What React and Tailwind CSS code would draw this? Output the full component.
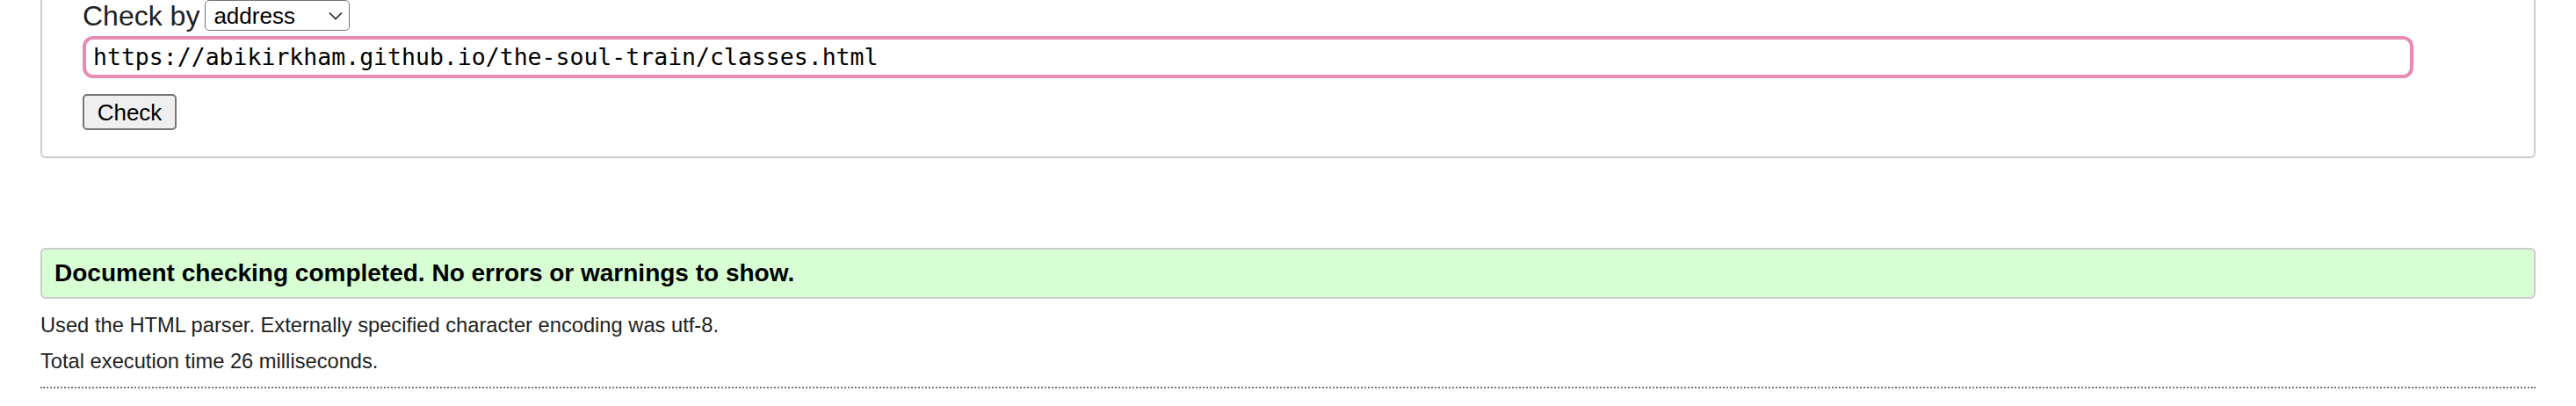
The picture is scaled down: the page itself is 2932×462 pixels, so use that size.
import React from "react";

export default function App() {
  return (
    <div className="w-[2932px] h-[462px] bg-white overflow-hidden px-[46px] text-[#222]" style={{ fontFamily: '"Liberation Sans", Arial, sans-serif' }}>
      {/* fieldset (top edge scrolled out of view) */}
      <div className="border-x-2 border-b-2 border-[#cccccc] rounded-b-[6px] pl-[46px] pr-[44px] pb-[30px]">
        <div className="flex items-center h-[35px] gap-[6px]">
          <span className="text-[32px] leading-none text-[#222]">Check by</span>
          <div className="relative w-[165px] h-[35px]">
            <select
              defaultValue="address"
              className="appearance-none w-full h-full border-[1.5px] border-[#767676] rounded-[5px] bg-white pl-[9px] text-[26px] leading-none text-black"
              style={{ fontFamily: '"Liberation Sans", Arial, sans-serif' }}
            >
              <option value="address">address</option>
              <option value="upload">file upload</option>
              <option value="input">text input</option>
            </select>
            <svg className="absolute right-[8px] top-[13px] pointer-events-none" width="16" height="10" viewBox="0 0 16 10" fill="none">
              <path d="M1 1.5 L8 8.5 L15 1.5" stroke="#222" strokeWidth="1.6" />
            </svg>
          </div>
        </div>
        <div className="mt-[6px] w-[2653px] h-[48px] border-[4px] border-[#e88ab4] rounded-[12px] flex items-center pl-[8px]">
          <span className="text-[26.5px] leading-none text-black" style={{ fontFamily: '"DejaVu Sans Mono", "Liberation Mono", monospace' }}>
            https://abikirkham.github.io/the-soul-train/classes.html
          </span>
        </div>
        <div className="mt-[18px]">
          <button className="w-[107px] h-[41px] bg-[#efefef] border-2 border-[#767676] rounded-[5px] text-[26px] leading-none text-black flex items-center justify-center">
            Check
          </button>
        </div>
      </div>

      {/* success message */}
      <div className="mt-[102px] h-[58px] border-2 border-[#cccccc] rounded-[6px] bg-[#d8fed3] flex items-center pl-[14px]">
        <span className="text-[28px] font-bold text-black leading-none">
          Document checking completed. No errors or warnings to show.
        </span>
      </div>

      <p className="mt-[10px] text-[23.7px] leading-[41px] text-[#222]">
        Used the HTML parser. Externally specified character encoding was utf-8.
      </p>
      <p className="text-[23.7px] leading-[41px] text-[#222]">
        Total execution time 26 milliseconds.
      </p>
      <div className="mt-[8px] border-t-2 border-dotted border-[#777]"></div>
    </div>
  );
}
